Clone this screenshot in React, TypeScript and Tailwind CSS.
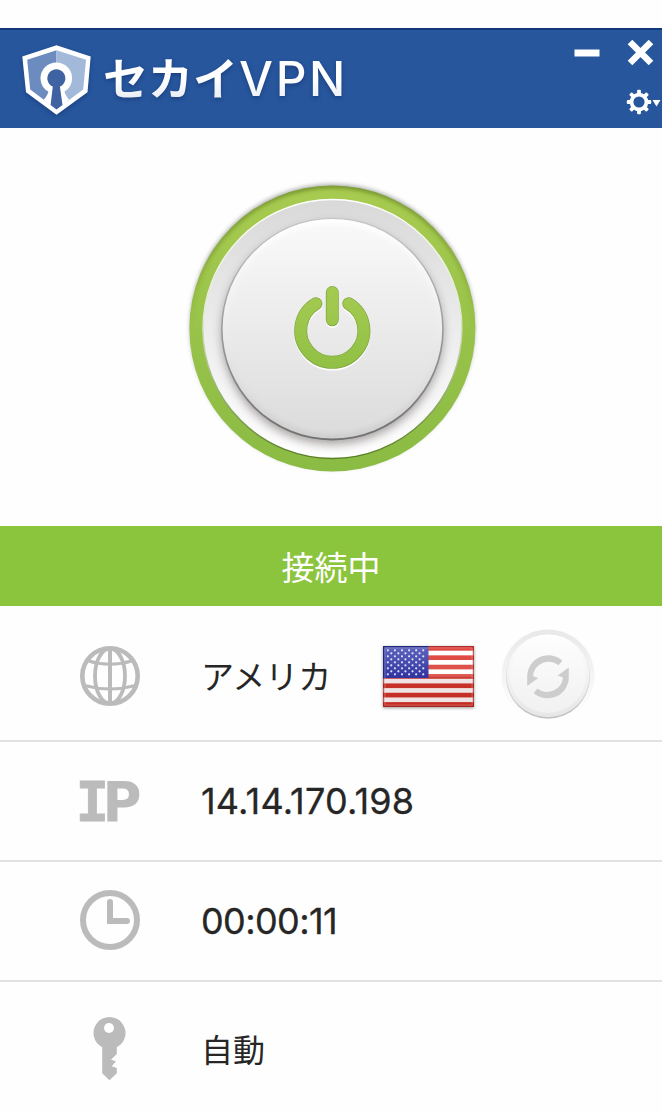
import type { ReactNode } from "react";

const STAR_ROWS = Array.from({ length: 9 }, (_, row) => ({
  y: 4.2 + row * 2.95,
  xs: Array.from({ length: row % 2 === 0 ? 6 : 5 }, (_, i) => (row % 2 === 0 ? 4.8 : 8.2) + i * 7),
}));

function ShieldLogo() {
  return (
    <svg width="76" height="78" viewBox="0 0 76 78" className="shrink-0 drop-shadow-[0_2px_2px_rgba(10,30,80,0.35)]">
      <path d="M38.5 3.2 72.7 14.5 69.5 50.2 38.5 72.7 8 50.2 4.3 14.5Z" fill="#fff" />
      <path d="M38.5 8.3V67.2L12.2 47.6 9.2 17.8Z" fill="#6c8bbf" />
      <path d="M38.5 8.3V67.2L65.2 47.6 68 17.8Z" fill="#a3b9d9" />
      <path d="M31.5 46C31 50 28.5 54.5 25.8 57.8L38.5 68.5 51 57.8C48.5 54.5 46 50 45.2 46Z" fill="#fff" />
      <circle cx="38.3" cy="36.2" r="15.8" fill="#fff" />
      <path d="M34.8 44.6A9 9 0 1 1 41.9 44.6L44.5 63 38.5 67.6 32.6 63Z" fill="#3f62a3" />
    </svg>
  );
}

function TitleBar() {
  return (
    <header className="flex h-[100px] items-start justify-between border-t-2 border-[#12387c] bg-[#27569d]">
      <div className="flex pt-3 pl-[18px]">
        <ShieldLogo />
        <h1 className="ml-[9px] flex h-[76px] items-center whitespace-nowrap drop-shadow-[0_2px_2px_rgba(10,30,80,0.4)]">
          <span className="mb-[6px] bg-gradient-to-b from-white from-50% to-[#dfe5ef] bg-clip-text font-['Noto_Sans_CJK_JP',sans-serif] text-[45px] leading-[64px] font-bold text-transparent">
            セカイ
          </span>
          <span className="mb-[2px] bg-gradient-to-b from-white from-50% to-[#dfe5ef] bg-clip-text pl-px font-['Inter',sans-serif] text-[48px] leading-[64px] font-medium tracking-[2.6px] text-transparent">
            VPN
          </span>
        </h1>
      </div>
      <svg width="102" height="98" viewBox="560 30 102 98" className="shrink-0">
        <rect x="574.5" y="49.5" width="25" height="7" fill="#fff" />
        <path d="m630 42 21 21m0-21-21 21" stroke="#fff" strokeWidth="6.5" />
        <g transform="translate(639 102)" fill="#fff">
          {[0, 45, 90, 135].map((angle) => (
            <rect key={angle} x="-1.9" y="-12.2" width="3.8" height="24.4" rx="1" transform={`rotate(${angle})`} />
          ))}
          <circle r="9.3" />
          <circle r="5.6" fill="#27569d" />
        </g>
        <path d="M652.5 100h8l-4 6.5Z" fill="#fff" />
      </svg>
    </header>
  );
}

function PowerButton() {
  return (
    <button className="block h-[310px] w-[310px]" aria-label="電源">
      <svg width="310" height="310" viewBox="178.2 174 310 310">
        <defs>
          <linearGradient id="rim" x1="0" y1="0" x2="0" y2="1">
            <stop offset="0" stopColor="#a8cb50" />
            <stop offset="1" stopColor="#8abb43" />
          </linearGradient>
          <linearGradient id="well" x1="0" y1="0" x2="0" y2="1">
            <stop offset="0" stopColor="#d9d9d9" />
            <stop offset="1" stopColor="#fff" />
          </linearGradient>
          <linearGradient id="edge" x1="0" y1="0" x2="0" y2="1">
            <stop offset="0" stopColor="#c4c4c4" />
            <stop offset="1" stopColor="#707070" />
          </linearGradient>
          <linearGradient id="bevel" x1="0" y1="0" x2="0" y2="1">
            <stop offset="0" stopColor="#fff" />
            <stop offset="0.5" stopColor="#ededed" />
            <stop offset="1" stopColor="#cecece" />
          </linearGradient>
          <linearGradient id="face" x1="0" y1="0" x2="0" y2="1">
            <stop offset="0" stopColor="#f9f9f9" />
            <stop offset="1" stopColor="#dcdcdc" />
          </linearGradient>
          <linearGradient id="shade" x1="0" y1="0" x2="0" y2="1">
            <stop offset="0" stopColor="#4a6418" stopOpacity="0.6" />
            <stop offset="0.5" stopColor="#4a6418" stopOpacity="0" />
          </linearGradient>
          <linearGradient id="lip" x1="0" y1="0" x2="0" y2="1">
            <stop offset="0" stopColor="#fff" />
            <stop offset="0.45" stopColor="#dfe8cf" />
            <stop offset="1" stopColor="#587d24" />
          </linearGradient>
          <linearGradient id="power" gradientUnits="userSpaceOnUse" x1="0" y1="286" x2="0" y2="369">
            <stop offset="0" stopColor="#a5cb51" />
            <stop offset="1" stopColor="#90c045" />
          </linearGradient>
          <clipPath id="rimClip">
            <circle cx="332.6" cy="328.5" r="143" />
          </clipPath>
          <filter id="blur2" x="-20%" y="-20%" width="140%" height="140%">
            <feGaussianBlur stdDeviation="2" />
          </filter>
          <filter id="blur5" x="-20%" y="-20%" width="140%" height="140%">
            <feGaussianBlur stdDeviation="5" />
          </filter>
        </defs>
        <circle cx="332.6" cy="326.5" r="142.5" fill="#777" opacity="0.6" filter="url(#blur2)" />
        <circle cx="332.6" cy="328.5" r="143" fill="url(#rim)" />
        <g clipPath="url(#rimClip)">
          <circle cx="332.6" cy="328.5" r="143" fill="none" stroke="url(#shade)" strokeWidth="5" filter="url(#blur2)" />
        </g>
        <circle cx="332.6" cy="329" r="129.5" fill="url(#well)" stroke="url(#lip)" strokeWidth="1.4" />
        <circle cx="332.6" cy="334" r="111" fill="#6b6060" opacity="0.55" filter="url(#blur5)" />
        <circle cx="332.6" cy="329.2" r="111.3" fill="url(#edge)" />
        <circle cx="332.6" cy="328.8" r="109.8" fill="url(#bevel)" />
        <circle cx="332.6" cy="328.8" r="105" fill="url(#face)" filter="url(#blur2)" />
        <g fill="none" strokeLinecap="round">
          <path
            d="M316 304.5a31.6 31.6 0 1 0 33 0M332.5 293v27.5"
            stroke="#fff"
            strokeWidth="13"
            transform="translate(0 1)"
          />
          <path d="M316 303.7a31.6 31.6 0 1 0 33 0M332.5 292.5v27.3" stroke="#83a842" strokeWidth="13" />
          <path d="M316 303.7a31.6 31.6 0 1 0 33 0M332.5 292.5v27.3" stroke="url(#power)" strokeWidth="11.4" />
        </g>
      </svg>
    </button>
  );
}

function GlobeIcon() {
  return (
    <svg width="60" height="60" viewBox="0 0 60 60" fill="none" stroke="#bbb">
      <circle cx="30" cy="30" r="27.7" strokeWidth="4.6" />
      <ellipse cx="30" cy="30" rx="15" ry="27.5" strokeWidth="3.8" />
      <path d="M30 2v56" strokeWidth="4" />
      <path d="M7 14.5Q30 22 53 14.5M4.5 39.5Q30 46.5 55.5 39.5" strokeWidth="3" />
    </svg>
  );
}

function IpIcon() {
  return (
    <div className="flex h-[60px] w-[60px] items-center text-[56px] leading-none font-bold text-[#bbb]">
      <svg width="25" height="41" viewBox="0 0 25 41" fill="#bbb" className="-mt-px shrink-0 overflow-visible">
        <text x="-4.5" y="41" stroke="#bbb" strokeWidth="0.8" className="font-['DejaVu_Sans_Mono',monospace]">
          I
        </text>
      </svg>
      <svg width="35" height="41" viewBox="0 0 35 41" fill="#bbb" className="-mt-px shrink-0 overflow-visible">
        <text x="-2.5" y="41" textLength="39" lengthAdjust="spacingAndGlyphs" className="font-['DejaVu_Sans',sans-serif]">
          P
        </text>
      </svg>
    </div>
  );
}

function ClockIcon() {
  return (
    <svg width="60" height="60" viewBox="0 0 60 60" fill="none" stroke="#bbb">
      <circle cx="30" cy="30" r="27" strokeWidth="6" />
      <path d="M30 12v19h17" strokeWidth="6" strokeLinecap="round" />
    </svg>
  );
}

function KeyIcon() {
  return (
    <svg width="60" height="64" viewBox="80 1016 60 64" fill="#bbb">
      <path d="M102.2 1046.3A16 16 0 1 1 116.8 1046.3V1053L111 1058.8 116 1060.3 111.8 1065.3 116.8 1067V1072.2L109.4 1079.2 102.2 1072.2Z" />
      <circle cx="109" cy="1027" r="5" fill="#fff" />
    </svg>
  );
}

function UsFlag() {
  return (
    <svg width="91" height="61" viewBox="0 0 90 60" preserveAspectRatio="none" className="shadow-[0_1px_3px_rgba(0,0,0,0.4)]">
      <defs>
        <linearGradient id="stripe" x1="0" y1="0" x2="0" y2="1">
          <stop offset="0" stopColor="#e0443f" />
          <stop offset="0.5" stopColor="#dd5750" />
          <stop offset="0.52" stopColor="#c83229" />
          <stop offset="1" stopColor="#c42b23" />
        </linearGradient>
        <linearGradient id="canton" x1="0" y1="0" x2="0" y2="1">
          <stop offset="0" stopColor="#6066bd" />
          <stop offset="1" stopColor="#3033a0" />
        </linearGradient>
      </defs>
      <rect width="90" height="60" fill="url(#stripe)" />
      {[0, 1, 2, 3, 4, 5].map((i) => (
        <rect key={i} y={4.6 + i * 9.2} width="90" height="4.6" fill={i < 3 ? "#fff" : "#efe3e3"} />
      ))}
      <rect width="45" height="31.5" fill="url(#canton)" />
      {STAR_ROWS.map((row) =>
        row.xs.map((x) => <circle key={`${x}-${row.y}`} cx={x} cy={row.y} r="1.1" fill="#dfe2f8" />),
      )}
      <rect x="1.8" y="1.8" width="86.4" height="56.4" fill="none" stroke="#fff" strokeOpacity="0.3" />
      <path d="M.6 32V.6H45" fill="none" stroke="#22267e" strokeWidth="1.3" />
      <path d="M45 .6h44.4v58.8H.6V32" fill="none" stroke="#9c211c" strokeOpacity="0.7" strokeWidth="1.3" />
    </svg>
  );
}

function RefreshButton() {
  return (
    <button className="block h-24 w-24" aria-label="更新">
      <svg width="96" height="96" viewBox="500 626 96 96">
        <defs>
          <linearGradient id="halo" x1="0" y1="0" x2="0" y2="1">
            <stop offset="0" stopColor="#e8e8e8" />
            <stop offset="0.9" stopColor="#fefefe" />
          </linearGradient>
          <linearGradient id="knobEdge" x1="0" y1="0" x2="0" y2="1">
            <stop offset="0" stopColor="#f0f0f0" />
            <stop offset="1" stopColor="#c2c2c2" />
          </linearGradient>
          <linearGradient id="knobRim" x1="0" y1="0" x2="0" y2="1">
            <stop offset="0" stopColor="#fff" />
            <stop offset="1" stopColor="#e6e6e6" />
          </linearGradient>
          <linearGradient id="knob" x1="0" y1="0" x2="0" y2="1">
            <stop offset="0" stopColor="#fdfdfd" />
            <stop offset="1" stopColor="#f1f1f1" />
          </linearGradient>
        </defs>
        <circle cx="548" cy="675" r="46.5" fill="url(#halo)" />
        <circle cx="548" cy="675.8" r="42" fill="url(#knobEdge)" />
        <circle cx="548" cy="674.8" r="41.4" fill="url(#knobRim)" />
        <circle cx="548" cy="674" r="38" fill="url(#knob)" />
        <g fill="#cdcdcd">
          <path d="M562.3 659.7A21 21 0 0 0 527.2 675V685L538.3 677 533 675.2A15.8 15.8 0 0 1 558.5 664.2Z" />
          <path d="M562.3 659.7A21 21 0 0 0 527.2 675V685L538.3 677 533 675.2A15.8 15.8 0 0 1 558.5 664.2Z" transform="rotate(180 548 675.8)" />
        </g>
      </svg>
    </button>
  );
}

function InfoRow({ icon, className, children }: { icon: ReactNode; className: string; children: ReactNode }) {
  return (
    <li className={`flex items-center border-[#e2e2e2] pl-20 ${className}`}>
      <span className="w-[121px] shrink-0">{icon}</span>
      {children}
    </li>
  );
}

export default function App() {
  return (
    <div className="h-[1112px] w-[662px] overflow-hidden bg-[#fefefe] pt-7 text-[#262626]">
      <TitleBar />
      <main>
        <section className="flex h-[398px] justify-center pt-[46px] pl-[4px]">
          <PowerButton />
        </section>
        <p className="flex h-20 items-center justify-center bg-[#8bc53d] pt-px font-['Noto_Sans_CJK_JP',sans-serif] text-[33px] leading-none text-white">
          接続中
        </p>
        <ul className="font-['Inter','Noto_Sans_CJK_JP',sans-serif] text-[36px] leading-none">
          <InfoRow icon={<GlobeIcon />} className="h-[136px] border-b-2 pt-1.5">
            <span className="mb-0.5 w-[182px] shrink-0 font-['Noto_Sans_CJK_JP',sans-serif] text-[33px]">
              アメリカ
            </span>
            <UsFlag />
            <span className="-mt-0.5 ml-[26px]">
              <RefreshButton />
            </span>
          </InfoRow>
          <InfoRow icon={<IpIcon />} className="h-[120px] border-b-2">
            <span className="tracking-[0.2px] [-webkit-text-stroke:0.3px_#262626]">14.14.170.198</span>
          </InfoRow>
          <InfoRow icon={<ClockIcon />} className="h-[120px] border-b-2 pb-0.5">
            <span className="mt-0.5 tracking-[-0.6px] [-webkit-text-stroke:0.3px_#262626]">00:00:11</span>
          </InfoRow>
          <InfoRow icon={<KeyIcon />} className="h-[130px] pt-[3px]">
            <span className="mb-px font-['Noto_Sans_CJK_JP',sans-serif] text-[32px]">自動</span>
          </InfoRow>
        </ul>
      </main>
    </div>
  );
}
